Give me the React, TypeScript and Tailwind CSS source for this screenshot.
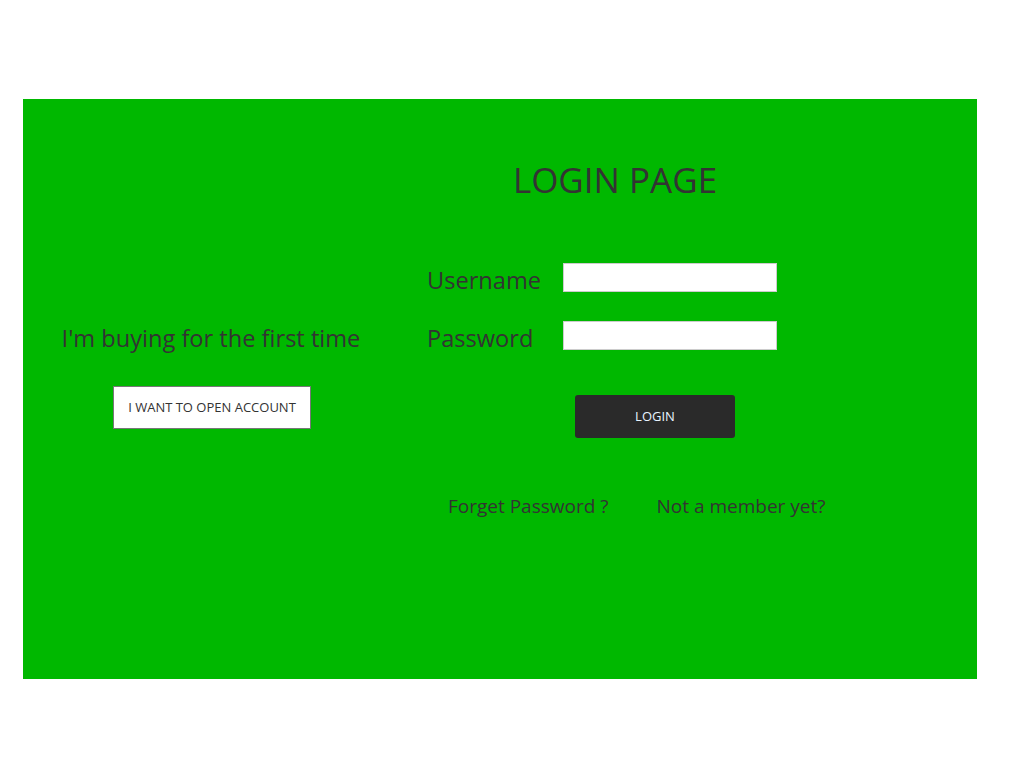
import React from "react";

export default function App() {
  const font = { fontFamily: '"Open Sans", "Noto Sans", sans-serif' };
  return (
    <div className="w-[1024px] h-[768px] bg-white pt-[99px] pl-[23px]" style={font}>
      <div className="w-[954px] h-[580px] bg-[#00b800] flex text-[#333333]">
        <div className="w-[376px] flex flex-col items-center pt-[223px]">
          <p className="text-[23.6px] leading-[32px] whitespace-nowrap">I'm buying for the first time</p>
          <button className="mt-[32px] ml-[2px] w-[198px] h-[43px] bg-white border border-[#777777] text-[13px] text-[#333333] uppercase">
            I want to open account
          </button>
        </div>
        <div className="flex flex-col pl-[28px] pt-[63px]">
          <h1 className="w-[376px] text-center text-[35px] leading-[36px] font-normal">LOGIN PAGE</h1>
          <div className="mt-[65px] flex items-start">
            <label className="w-[136px] text-[23.6px] leading-[29px] mt-[3px]">Username</label>
            <input className="w-[214px] h-[29px] bg-white border border-[#cccccc] outline-none" />
          </div>
          <div className="mt-[26px] flex items-start">
            <label className="w-[136px] text-[23.6px] leading-[29px] mt-[3px]">Password</label>
            <input type="password" className="w-[214px] h-[29px] bg-white border border-[#cccccc] outline-none" />
          </div>
          <button className="mt-[42px] ml-[148px] w-[160px] h-[43px] bg-[#2a2a2a] rounded-[3px] text-[13px] text-[#e8f4ff]">
            LOGIN
          </button>
          <div className="mt-[54px] ml-[21px] flex gap-[48px] text-[19px] leading-[28px] font-normal text-[#333333]">
            <a>Forget Password ?</a>
            <a>Not a member yet?</a>
          </div>
        </div>
      </div>
    </div>
  );
}
